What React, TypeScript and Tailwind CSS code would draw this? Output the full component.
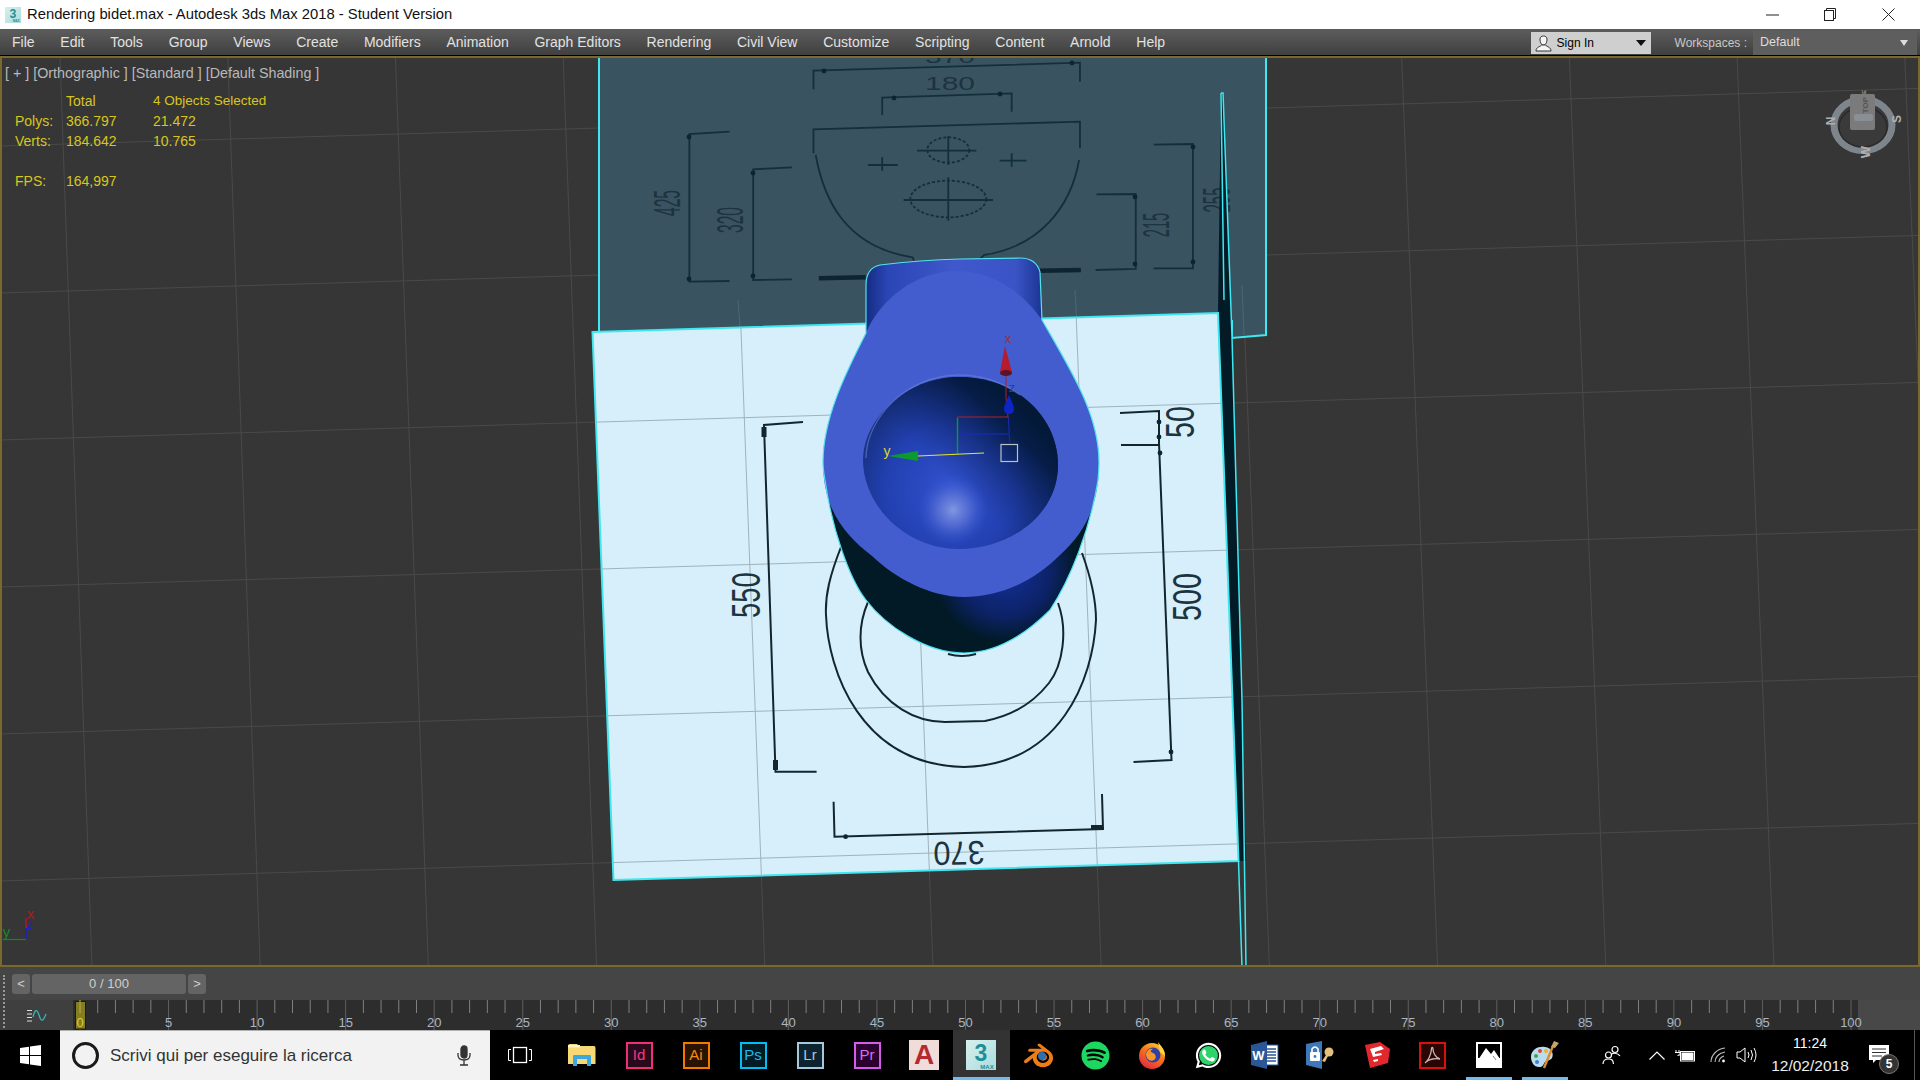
import React from "react";
import { FaSpotify, FaWhatsapp } from "react-icons/fa";
import { SiBlender } from "react-icons/si";

const menuItems = ["File", "Edit", "Tools", "Group", "Views", "Create", "Modifiers", "Animation", "Graph Editors", "Rendering", "Civil View", "Customize", "Scripting", "Content", "Arnold", "Help"];

const SANS = "Liberation Sans, sans-serif";

// page coords -> the drawing was measured from two stretched crops
const Z3 = "translate(580 50) scale(0.4464 0.3333)";

const RIM = "M866 333 C880 300 915 271 957 271 C995 271 1025 295 1042 320 C1072 372 1099 415 1099 462 C1099 510 1082 535 1060 555 C1030 585 995 597 964 597 C930 597 895 578 872 556 C845 535 823 510 823 462 C823 415 850 365 866 333 Z";
const BOWL = "M959 377 C1020 377 1058 420 1058 465 C1058 515 1010 549 959 549 C905 549 863 505 863 460 C863 420 905 377 959 377 Z";

function Logo3ds({ size }: { size: number }) {
  return (
    <svg width={size} height={size} viewBox="0 0 30 30">
      <defs>
        <linearGradient id={`max${size}`} x1="0" y1="0" x2="1" y2="1">
          <stop offset="0" stopColor="#d8f0ee" />
          <stop offset="1" stopColor="#a9dcdc" />
        </linearGradient>
      </defs>
      <rect width="30" height="30" fill={`url(#max${size})`} />
      <text x="15" y="21" textAnchor="middle" fontFamily={SANS} fontWeight="700" fontSize="23" fill="#1f8f97">3</text>
      <text x="21" y="28.5" textAnchor="middle" fontFamily={SANS} fontWeight="700" fontSize="6" fill="#1f8f97">MAX</text>
    </svg>
  );
}

function AdobeIcon({ label, border, bg, color }: { label: string; border: string; bg: string; color: string }) {
  return (
    <div
      className="flex h-[27px] w-[27px] items-center justify-center border-2 text-[15px] font-['Liberation_Sans',sans-serif]"
      style={{ borderColor: border, backgroundColor: bg, color }}
    >
      {label}
    </div>
  );
}

function Ruler() {
  const ticks = Array.from({ length: 101 }, (_, i) => i);
  const xOf = (i: number) => 80 + i * 17.71;
  return (
    <svg width="1920" height="30" className="relative block">
      {ticks.map((i) => (
        <line key={i} x1={xOf(i)} x2={xOf(i)} y1="0" y2={i % 5 === 0 ? 30 : 13} stroke="#8a8a8a" strokeWidth="1" opacity={i % 5 === 0 ? 0.55 : 0.9} />
      ))}
      <rect x="75.5" y="1.5" width="10" height="27.5" fill="#857d22" stroke="#1c1c10" />
      <line x1="80" x2="80" y1="0" y2="13" stroke="#b5ad50" />
      {ticks.filter((i) => i % 5 === 0).map((i) => (
        <text
          key={i}
          x={xOf(i)}
          y="26.5"
          textAnchor="middle"
          fontFamily={SANS}
          fontSize="13"
          fill={i === 0 ? "#dccf3a" : "#aab6c2"}
        >
          {i}
        </text>
      ))}
    </svg>
  );
}

function Dot({ x, y }: { x: number; y: number }) {
  return <circle cx={x} cy={y} r="2.4" fill="#0d2530" />;
}

function Num({ t, x, y, r = 0, sx = 1, sy = 1, fs = 20, fill = "#1c3440" }: { t: string; x: number; y: number; r?: number; sx?: number; sy?: number; fs?: number; fill?: string }) {
  return (
    <text
      transform={`translate(${x} ${y}) rotate(${r}) scale(${sx} ${sy})`}
      textAnchor="middle"
      dominantBaseline="central"
      fontFamily={SANS}
      fontSize={fs}
      fill={fill}
    >
      {t}
    </text>
  );
}

function Scene() {
  const verticals = Array.from({ length: 12 }, (_, i) => ({ x1: 60 + 167.7 * i, x2: 92 + 168.2 * i }));
  const horizontals = [0, 1, 2, 3, 4, 5].map((j) => 146 + 147 * j);
  const grid = (stroke: string, width = 1) => (
    <g stroke={stroke} strokeWidth={width}>
      {verticals.map((v, i) => <line key={i} x1={v.x1} y1="56" x2={v.x2} y2="967" />)}
      {horizontals.map((y, i) => <line key={i} x1="0" y1={y} x2="1920" y2={y - 57.6} />)}
    </g>
  );
  const bracket = { fill: "none", stroke: "#12303c", strokeWidth: 1.8, vectorEffect: "non-scaling-stroke" as const };
  const whiteLine = { fill: "none", stroke: "#13262e", strokeWidth: 2 };

  return (
    <svg width="1920" height="911" viewBox="0 56 1920 911" className="absolute inset-0">
      <defs>
        <clipPath id="whitePlane"><polygon points="592.5,332 1218,313 1238.5,861 613.5,880" /></clipPath>
        <linearGradient id="neck" x1="0" x2="1" y1="0" y2="0">
          <stop offset="0" stopColor="#152c82" />
          <stop offset="0.12" stopColor="#2a45b4" />
          <stop offset="0.5" stopColor="#3f58cc" />
          <stop offset="0.85" stopColor="#3a54c6" />
          <stop offset="1" stopColor="#1b3594" />
        </linearGradient>
        <radialGradient id="bowl" gradientUnits="userSpaceOnUse" cx="950" cy="490" r="118">
          <stop offset="0" stopColor="#3252cf" />
          <stop offset="0.55" stopColor="#2240b0" />
          <stop offset="0.85" stopColor="#16307f" />
          <stop offset="1" stopColor="#0d2258" />
        </radialGradient>
        <linearGradient id="bowlShade" gradientUnits="userSpaceOnUse" x1="1040" y1="385" x2="950" y2="480">
          <stop offset="0" stopColor="#01172a" />
          <stop offset="0.4" stopColor="#03193c" stopOpacity="0.85" />
          <stop offset="1" stopColor="#12297a" stopOpacity="0" />
        </linearGradient>
        <radialGradient id="glow" gradientUnits="userSpaceOnUse" cx="953" cy="510" r="36">
          <stop offset="0" stopColor="#8297e2" />
          <stop offset="0.45" stopColor="#6077d8" stopOpacity="0.7" />
          <stop offset="1" stopColor="#3252cf" stopOpacity="0" />
        </radialGradient>
        <radialGradient id="under" gradientUnits="userSpaceOnUse" cx="1005" cy="570" r="72">
          <stop offset="0" stopColor="#15309a" />
          <stop offset="0.65" stopColor="#0c2266" />
          <stop offset="1" stopColor="#011a26" />
        </radialGradient>
      </defs>

      <rect x="0" y="56" width="1920" height="911" fill="#363636" />
      {grid("#4a4a4a")}

      {/* back plane with the front view of the drawing */}
      <polygon points="599,56 1266,56 1266,335 1232,338 1220,340 600,340" fill="#3a5360" />
      <path d="M599 56 V333 M1266 56 V335 L1232 338 V320" fill="none" stroke="#3fe8f0" strokeWidth="2" />
      <g fill="none" stroke="#4e6672" strokeWidth="1">
        <line x1="738" y1="300" x2="741" y2="340" />
        <line x1="1075" y1="290" x2="1077" y2="330" />
        <line x1="1242" y1="285" x2="1244" y2="335" />
      </g>
      <g transform={Z3}>
        <path {...bracket} d="M523 118 V62 L1120 38 V95" />
        <path {...bracket} d="M677 195 V143 L967 130 V185" />
        <path {...bracket} d="M523 310 V238 L1120 215 V295" />
        <path {...bracket} d="M528 315 C545 440 590 590 745 622 L748 632 M895 628 L905 615 C1030 590 1100 470 1118 330" />
        <path {...bracket} d="M335 245 L245 252 V695 L335 693" />
        <path {...bracket} d="M475 352 L388 358 V690 L475 688" />
        <path {...bracket} d="M1285 284 L1373 282 V655 L1285 655" />
        <path {...bracket} d="M1157 433 L1245 432 V657 L1155 660" />
        <path {...bracket} d="M755 302 H888 M825 258 V345 M725 450 H925 M825 382 V512" />
        <path {...bracket} d="M645 345 H712 M677 322 V362 M940 332 H1000 M967 310 V350" />
        <ellipse {...bracket} cx="825" cy="300" rx="47" ry="38" strokeDasharray="3 2" />
        <ellipse {...bracket} cx="825" cy="447" rx="85" ry="55" strokeDasharray="3 2" />
        <path fill="none" stroke="#0d2530" strokeWidth="4.5" vectorEffect="non-scaling-stroke" d="M535 685 L640 682 M1030 662 L1122 660" />
      </g>
      <Dot x={824} y={71} />
      <Dot x={1072} y={63} />
      <Dot x={894} y={98} />
      <Dot x={1000} y={94} />
      <Dot x={689} y={137} />
      <Dot x={689} y={279} />
      <Dot x={753} y={173} />
      <Dot x={753} y={276} />
      <Dot x={1193} y={147} />
      <Dot x={1193} y={262} />
      <Dot x={1135} y={197} />
      <Dot x={1135} y={264} />
      <Num t="370" x={950} y={57} sx={1.5} sy={0.9} />
      <Num t="180" x={950} y={84} sx={1.5} sy={0.9} />
      <Num t="425" x={667} y={203} r={-90} sx={0.78} sy={1.85} />
      <Num t="320" x={730} y={220} r={-90} sx={0.78} sy={1.85} />
      <Num t="215" x={1156} y={225} r={-90} sx={0.74} sy={1.85} />
      <Num t="255" x={1216} y={200} r={-90} sx={0.75} sy={1.95} />

      {/* dark sliver of the plane seen edge on */}
      <polygon points="1221,93 1223,93 1232,337 1246,861 1238.5,861 1218,313" fill="#021b27" />
      <path d="M1221 93 H1223 L1232 337 L1242 700 L1246 967 M1221 93 L1224 300 M1238.5 861 L1242 967" fill="none" stroke="#3fe8f0" strokeWidth="1.5" />

      {/* floor plane */}
      <polygon points="592.5,332 1218,313 1238.5,861 613.5,880" fill="#d6effb" stroke="#3fe8f0" strokeWidth="2" />
      <g clipPath="url(#whitePlane)">{grid("#9fb3bc")}</g>
      <path {...whiteLine} d="M803 422 L764 425 L775.5 771.7 L816.6 771.7" />
      <path {...whiteLine} d="M1120 413 L1159 411 V445 L1121 445 M1159 443 L1171.5 760 L1133.5 762" />
      <path {...whiteLine} d="M833.6 801.7 L834.5 836.7 L1103 829 L1102 794" />
      <path {...whiteLine} d="M841 547 C830 575 825 595 826 615 C828 670 860 765 964 767 C1060 765 1093 680 1096 620 C1096 600 1090 575 1082 553" />
      <path {...whiteLine} d="M868 602 C858 625 858 650 868 672 C885 705 915 722 945 722 L985 721 C1012 716 1034 702 1049 683 C1063 665 1068 630 1058 603" />
      <path {...whiteLine} d="M948 654 Q962 658 976 654" />
      <rect x="761.5" y="427" width="5" height="10" fill="#13262e" />
      <rect x="773" y="760" width="5" height="10" fill="#13262e" />
      <Dot x={1159} y={422} />
      <Dot x={1159} y={437} />
      <Dot x={1160} y={453} />
      <Dot x={1171} y={752} />
      <Dot x={845.6} y={836.7} />
      <rect x="1091" y="825" width="11" height="5" fill="#13262e" />
      <Num t="50" x={1180} y={422} r={-90} fs={28} sx={1.02} sy={1.42} />
      <Num t="550" x={746} y={595} r={-90} fs={28} sx={0.98} sy={1.42} />
      <Num t="500" x={1187} y={597} r={-90} fs={28} sx={1.03} sy={1.42} />
      <Num t="370" x={959} y={853} r={179} fs={32} sx={0.96} sy={1.04} />

      {/* bidet */}
      <path d="M866 345 V285 Q866 268 880 265 Q920 260 960 259 L1020 258 Q1036 258 1040 272 L1042 330 Z" fill="url(#neck)" />
      <path d="M825 480 C832 530 850 580 866 600 C885 625 925 653 964 653 C1000 653 1030 630 1050 610 C1070 580 1090 530 1098 480 Z" fill="url(#under)" />
      <path d={RIM} fill="#435dcf" />
      <path d={BOWL} fill="url(#bowl)" />
      <path d={BOWL} fill="url(#bowlShade)" />
      <ellipse cx="953" cy="510" rx="34" ry="38" fill="url(#glow)" />
      <path d="M866 458 C866 420 905 375 959 375 C985 375 1005 384 1020 395" fill="none" stroke="#7186e0" strokeWidth="1.5" opacity="0.5" />
      <path d="M866 333 L866 285 Q866 268 880 265 Q920 260 960 259 L1020 258 Q1036 258 1040 272 L1042 320 C1072 372 1099 415 1099 462 C1099 470 1098.5 475 1098 480 C1090 530 1070 580 1050 610 C1030 630 1000 653 964 653 C925 653 885 625 866 600 C850 580 832 530 825 480 C823.5 472 823 468 823 462 C823 415 850 365 866 333 Z" fill="none" stroke="#52e2ee" strokeWidth="1.2" />

      {/* move gizmo */}
      <path d="M1006 373 V397 L1008 417 H957" fill="none" stroke="#b0202c" strokeWidth="1" />
      <path d="M957 434 H1008.5 M1008.5 417 L1009.5 442" fill="none" stroke="#1a2bc0" strokeWidth="1" />
      <path d="M957.5 418 V454" fill="none" stroke="#0f9a28" strokeWidth="1.4" />
      <path d="M918 456 L984 453" fill="none" stroke="#e8e820" strokeWidth="1.2" />
      <polygon points="1005,346 1000,372 1012,372" fill="#b61c2c" />
      <ellipse cx="1006" cy="373" rx="6" ry="3" fill="#5a1424" />
      <path d="M1009 395 C1006 402 1004 406 1004 409 C1004 412 1006 414 1009 414 C1012 414 1014 412 1014 409 C1014 406 1012 402 1009 395 Z" fill="#0c24c8" />
      <polygon points="888,456 918,451 918,461" fill="#0b9a2c" />
      <text x="1008" y="343" textAnchor="middle" fontFamily={SANS} fontSize="13" fill="#93303e">x</text>
      <text x="1012" y="392" textAnchor="middle" fontFamily={SANS} fontSize="13" fill="#2a3ea8">z</text>
      <text x="887" y="456" textAnchor="middle" fontFamily={SANS} fontSize="14" fill="#d8d83a">y</text>
      <rect x="1001" y="444.5" width="16.5" height="17" fill="none" stroke="#b8c0c8" strokeWidth="1.2" />

      {/* viewcube */}
      <ellipse cx="1863" cy="125" rx="29" ry="25.5" fill="#3a3a3a" stroke="#7e858c" strokeWidth="7" />
      <ellipse cx="1863" cy="127" rx="24" ry="20" fill="none" stroke="#2a2a2a" strokeWidth="1.5" />
      <rect x="1850" y="94" width="25" height="36" rx="2" fill="#7b7b7b" />
      <rect x="1854" y="114" width="19" height="7" rx="2" fill="#8a8f96" />
      <text transform="translate(1865 105) rotate(-90)" textAnchor="middle" dominantBaseline="central" fontFamily={SANS} fontSize="8" fontWeight="700" fill="#565656">TOP</text>
      <text transform="translate(1831 121) rotate(-90)" textAnchor="middle" dominantBaseline="central" fontFamily={SANS} fontSize="12" fontWeight="700" fill="#b0b0b0">N</text>
      <text transform="translate(1897 119) rotate(-90)" textAnchor="middle" dominantBaseline="central" fontFamily={SANS} fontSize="12" fontWeight="700" fill="#b0b0b0">S</text>
      <text transform="translate(1865 152) rotate(-90)" textAnchor="middle" dominantBaseline="central" fontFamily={SANS} fontSize="13" fontWeight="700" fill="#b0b0b0">W</text>
      <text transform="translate(1864 92) rotate(-90)" textAnchor="middle" dominantBaseline="central" fontFamily={SANS} fontSize="6" fontWeight="700" fill="#9a9a9a">E</text>

      {/* corner axis tripod */}
      <path d="M26 918 V928" stroke="#b01a22" strokeWidth="1.5" />
      <path d="M26 928 V940" stroke="#2020c8" strokeWidth="1.5" />
      <path d="M3 939.5 H26" stroke="#0f8a1e" strokeWidth="1.2" />
      <text x="30.5" y="919" textAnchor="middle" fontFamily={SANS} fontSize="15" fill="#a81c22">x</text>
      <text x="29.5" y="929" textAnchor="middle" fontFamily={SANS} fontSize="14" fill="#2424c0">z</text>
      <text x="6.5" y="937" textAnchor="middle" fontFamily={SANS} fontSize="15" fill="#128a20">y</text>
    </svg>
  );
}

function Folder() {
  return (
    <svg width="28" height="24" viewBox="0 0 28 24">
      <path d="M0 3 Q0 1 2 1 H9 L11 3 H26 Q27.5 3 27.5 5 V21 H0 Z" fill="#f8d775" />
      <rect x="0" y="2" width="12" height="2.5" fill="#fff3c0" />
      <path d="M5 23 V13 Q5 12 6 12 H22 Q23 12 23 13 V23 H19 V16 H9 V23 Z" fill="#3ba9e0" />
    </svg>
  );
}

function Firefox() {
  return (
    <svg width="28" height="28" viewBox="0 0 28 28">
      <defs>
        <linearGradient id="ff" x1="0.2" y1="1" x2="0.8" y2="0">
          <stop offset="0" stopColor="#e3243f" />
          <stop offset="0.6" stopColor="#f77a1c" />
          <stop offset="1" stopColor="#ffcb2c" />
        </linearGradient>
      </defs>
      <circle cx="14" cy="15" r="13" fill="url(#ff)" />
      <circle cx="15" cy="14" r="7.5" fill="#2f3fa6" />
      <path d="M8 13 C9 9 12 7 15 8 C12 9 12 11 15 12 C18 13 19 17 16 19 C12 21 8 18 8 13 Z" fill="#f9962a" />
      <path d="M20 1 C23 5 27 9 27 15 L22 11 Z" fill="#ffd93a" />
    </svg>
  );
}

function Word() {
  return (
    <svg width="28" height="28" viewBox="0 0 28 28">
      <rect x="13" y="4" width="14" height="20" fill="#fff" stroke="#2b5697" />
      <path d="M15 8 H25 M15 11 H25 M15 14 H25 M15 17 H25 M15 20 H25" stroke="#2b5697" strokeWidth="1.4" />
      <polygon points="0,4 16,0 16,28 0,24" fill="#2b5697" />
      <text x="7.5" y="19" textAnchor="middle" fontFamily={SANS} fontWeight="700" fontSize="13" fill="#fff">W</text>
    </svg>
  );
}

function LockBook() {
  return (
    <svg width="30" height="28" viewBox="0 0 30 28">
      <polygon points="0,3 16,0 16,28 0,24" fill="#3f78b8" />
      <rect x="4" y="11" width="10" height="9" rx="1" fill="#fff" />
      <path d="M6 11 V8 Q9 4 12 8 V11" fill="none" stroke="#fff" strokeWidth="1.6" />
      <circle cx="9" cy="15.5" r="1.4" fill="#3f78b8" />
      <circle cx="23" cy="11" r="4.5" fill="#e3c07d" />
      <path d="M20 14 L16 20 L19 21 L22 15 Z" fill="#e3c07d" />
    </svg>
  );
}

function Sketchup() {
  return (
    <svg width="26" height="28" viewBox="0 0 26 28">
      <polygon points="1,4 16,1 26,8 24,22 6,27" fill="#e2282f" />
      <path d="M6 8 L17 5 L20 8 L11 11 L11 13 L17 12 L18 14 L9 16 L8 13 Z" fill="#fff" />
      <path d="M9 19 L14 18 L14 20 L10 21 Z" fill="#fff" />
    </svg>
  );
}

function Acrobat() {
  return (
    <div className="flex h-[27px] w-[27px] items-center justify-center border-2 border-[#d4130a] bg-[#2b0404]">
      <svg width="19" height="19" viewBox="0 0 19 19">
        <path d="M2 17 C5 15 8 9 8.5 3 C8.5 1 10 1 10 3 C10 7 13 12 17 13 C13 12 6 13 3 16" fill="none" stroke="#c9b6b2" strokeWidth="1.3" />
      </svg>
    </div>
  );
}

function Photos() {
  return (
    <svg width="26" height="26" viewBox="0 0 26 26">
      <rect width="26" height="26" fill="#fff" />
      <rect x="2" y="2" width="22" height="14" fill="#000" />
      <path d="M2 18 L10 6 L15 12 L18 8 L24 17 V24 H2 Z" fill="#fff" />
      <path d="M17 14 L20 18" stroke="#888" strokeWidth="1" />
    </svg>
  );
}

function Paint() {
  return (
    <svg width="30" height="30" viewBox="0 0 30 30">
      <path d="M1 17 C1 9 9 6 15 7 C22 8 24 14 22 18 C20 21 17 20 15 22 C13 25 13 27 9 27 C4 27 1 22 1 17 Z" fill="#b9dcef" />
      <circle cx="6" cy="16" r="2" fill="#3aa84a" />
      <circle cx="10" cy="11" r="2" fill="#e0483a" />
      <circle cx="16" cy="11" r="2" fill="#f3b21c" />
      <circle cx="7" cy="22" r="2" fill="#3a7fd8" />
      <path d="M14 28 L23 6" stroke="#e08a2a" strokeWidth="2.4" />
      <path d="M21 7 L24 1 L29 3 L25 8 Z" fill="#c8a468" />
    </svg>
  );
}

function Tray() {
  return (
    <div className="absolute right-0 top-0 flex h-full w-[340px] items-center text-white font-['Liberation_Sans',sans-serif]">
      <svg width="20" height="20" viewBox="0 0 20 20" className="ml-[22px]" fill="none" stroke="#fff" strokeWidth="1.2">
        <circle cx="6.5" cy="10" r="3" />
        <path d="M1 19 C1 15 3 14 6.5 14 C10 14 11 15 11.5 19" />
        <circle cx="13" cy="4.5" r="3" />
        <path d="M9.5 9 C12 8 16 8 18 11" />
      </svg>
      <svg width="16" height="9" viewBox="0 0 16 9" className="ml-[27px]" fill="none" stroke="#fff" strokeWidth="1.2">
        <path d="M0.5 8.5 L8 1 L15.5 8.5" />
      </svg>
      <svg width="20" height="13" viewBox="0 0 20 13" className="ml-[10px]" fill="none" stroke="#fff" strokeWidth="1">
        <path d="M1 1 V3.5 M4 1 V3.5 M0 3.5 H5 V6 H3 V7" />
        <rect x="5.5" y="2.5" width="14" height="9.5" />
        <rect x="7" y="4" width="11" height="6.5" fill="#fff" />
      </svg>
      <svg width="16" height="16" viewBox="0 0 16 16" className="ml-[15px]" fill="none" stroke="#bbb" strokeWidth="1.1">
        <path d="M1 15 C1 8 7 2 15 1 M5 15 C5 10 9 6 15 5 M9 15 C9 12 11 10 14 9" />
        <circle cx="13.5" cy="14" r="1.4" fill="#fff" stroke="none" />
      </svg>
      <svg width="21" height="16" viewBox="0 0 21 16" className="ml-[10px]" fill="none" stroke="#fff" strokeWidth="1">
        <path d="M1 5 H4 L9 1 V15 L4 11 H1 Z" />
        <path d="M12 5 Q14 8 12 11 M15 3 Q18 8 15 13 M18 1 Q22 8 18 15" />
      </svg>
      <div className="ml-[13px] flex w-[80px] flex-col items-center leading-none">
        <span className="text-[14px]">11:24</span>
        <span className="mt-[8px] text-[15.5px] text-[#eeeeee]">12/02/2018</span>
      </div>
      <div className="relative ml-[19px] h-[18px] w-[20px] self-start mt-[15px]">
        <svg width="20" height="21" viewBox="0 0 20 21">
          <path d="M0 0 H20 V15 H7 L4 18 V15 H0 Z" fill="#fff" />
          <path d="M3 4 H17 M3 7.5 H17 M3 11 H13" stroke="#333" strokeWidth="1" />
        </svg>
        <div className="absolute left-[10px] top-[9px] flex h-[20px] w-[20px] items-center justify-center rounded-full border border-[#777] bg-[#333333] text-[12px] font-bold">5</div>
      </div>
      <div className="absolute right-[5px] top-0 h-full w-px bg-[#555555]" />
    </div>
  );
}

export default function App() {
  return (
    <div className="flex h-[1080px] w-[1920px] flex-col overflow-hidden font-['Liberation_Sans',sans-serif]">
      {/* title bar */}
      <div className="flex h-[29px] shrink-0 items-center bg-white pl-[5px] pr-[3px]">
        <Logo3ds size={16} />
        <span className="ml-[6px] text-[14.8px] text-[#111111]">Rendering bidet.max - Autodesk 3ds Max 2018 - Student Version</span>
        <div className="ml-auto flex">
          <div className="flex h-[29px] w-[58px] items-center justify-center">
            <svg width="13" height="2"><rect width="13" height="1" y="0.5" fill="#222" /></svg>
          </div>
          <div className="flex h-[29px] w-[58px] items-center justify-center">
            <svg width="12" height="13" viewBox="0 0 12 13" fill="none" stroke="#222"><rect x="0.5" y="2.5" width="9" height="10" /><path d="M2.5 2.5 V0.5 H11.5 V10.5 H9.5" /></svg>
          </div>
          <div className="flex h-[29px] w-[58px] items-center justify-center">
            <svg width="13" height="13" viewBox="0 0 13 13" stroke="#222"><path d="M0.5 0.5 L12.5 12.5 M12.5 0.5 L0.5 12.5" /></svg>
          </div>
        </div>
      </div>

      {/* menu bar */}
      <div className="flex h-[27px] shrink-0 items-center border-t border-b border-t-[#5a5a5a] border-b-black bg-gradient-to-b from-[#5c5c5c] to-[#404040] pl-[12px] pr-[3px] text-[14px] text-[#e2e2e2]">
        <div className="flex gap-[25.75px]">
          {menuItems.map((item) => (
            <span key={item}>{item}</span>
          ))}
        </div>
        <div className="ml-auto flex h-[22px] w-[120px] items-center bg-[#cfcfcf] pl-[4px] pr-[5px] text-[12px] text-black">
          <svg width="17" height="19" viewBox="0 0 17 19" fill="#f5f5f5" stroke="#333">
            <path d="M5 6 C5 2 12 2 12 6 C12 9 11 12 8.5 12 C6 12 5 9 5 6 Z" />
            <path d="M1 18 C1 14 5 14 6.5 12 H10.5 C12 14 16 14 16 18 Z" />
          </svg>
          <span className="ml-[5px]">Sign In</span>
          <svg width="10" height="6" className="ml-auto"><polygon points="0,0 10,0 5,6" fill="#111" /></svg>
        </div>
        <span className="ml-[24px] text-[12px] text-[#c8c8c8]">Workspaces :</span>
        <div className="ml-[6px] flex h-[24px] w-[164px] items-center bg-[#5e5e5e] pl-[7px] pr-[9px] text-[12.5px] text-[#dddddd]">
          <span>Default</span>
          <svg width="8" height="6" className="ml-auto"><polygon points="0,0 8,0 4,6" fill="#dddddd" /></svg>
        </div>
      </div>

      {/* viewport */}
      <div className="relative h-[911px] shrink-0 bg-[#363636]">
        <Scene />
        <div className="absolute inset-0 border-2 border-[#7a692d]" />
        <div className="absolute left-[5px] top-[8px] text-[14.3px] leading-[18px] text-[#b9b9b9]">[ + ] [Orthographic ] [Standard ] [Default Shading ]</div>
        <div className="absolute left-[15px] top-[35px] grid grid-cols-[51px_87px_auto] text-[14px] leading-[20px] text-[#d8c61c]">
          <span />
          <span>Total</span>
          <span className="text-[13.5px]">4 Objects Selected</span>
          <span>Polys:</span>
          <span>366.797</span>
          <span>21.472</span>
          <span>Verts:</span>
          <span>184.642</span>
          <span>10.765</span>
          <span className="col-span-3 h-[20px]" />
          <span>FPS:</span>
          <span>164,997</span>
          <span />
        </div>
      </div>

      {/* time slider */}
      <div className="relative z-10 flex h-[33px] shrink-0 items-center gap-[2px] bg-[#454545] pl-[12px] text-[13px] text-[#cfcfcf]">
        <div className="absolute left-[3px] top-[8px] h-[53px] border-l-2 border-dotted border-[#999999]" />
        <div className="flex h-[20px] w-[18px] items-center justify-center rounded-[3px] bg-[#646464]">&lt;</div>
        <div className="flex h-[20px] w-[154px] items-center justify-center rounded-[3px] bg-[#646464]">0 / 100</div>
        <div className="flex h-[20px] w-[18px] items-center justify-center rounded-[3px] bg-[#646464]">&gt;</div>
      </div>

      {/* track bar */}
      <div className="relative h-[30px] shrink-0 bg-[#2d2d2d]">
        <div className="absolute right-0 top-0 h-full w-[62px] bg-[#484848]" />
        <Ruler />
        <div className="absolute left-0 top-0 flex h-full w-[73px] items-center bg-[#3f3f3f] pl-[27px]">
          <svg width="20" height="13" viewBox="0 0 20 13" fill="none">
            <path d="M0 1.5 H5 M0 5 H5 M0 8.5 H5 M0 12 H5" stroke="#dddddd" />
            <path d="M6 8 C8 0 10 0 12 6 C14 13 16 13 19 5" stroke="#3ab5b5" strokeWidth="1.3" />
          </svg>
        </div>
        <div className="absolute left-[11px] right-0 top-[-1px] h-px bg-[#111111]" />
      </div>

      {/* taskbar */}
      <div className="relative flex h-[50px] shrink-0 bg-black">
        <div className="flex w-[60px] items-center justify-center">
          <svg width="21" height="21" viewBox="0 0 21 21" fill="#fff">
            <polygon points="0,3 9,1.7 9,10 0,10" />
            <polygon points="10,1.5 21,0 21,10 10,10" />
            <polygon points="0,11 9,11 9,19.3 0,18" />
            <polygon points="10,11 21,11 21,21 10,19.5" />
          </svg>
        </div>
        <div className="flex w-[430px] items-center border-t border-[#b0b0b0] bg-[#f2f2f2] pl-[12px] pr-[19px] text-[17px] text-[#333333]">
          <div className="h-[27px] w-[27px] rounded-full border-[3px] border-[#1a1a1a]" />
          <span className="ml-[11px]">Scrivi qui per eseguire la ricerca</span>
          <svg width="14" height="21" viewBox="0 0 14 21" className="ml-auto" fill="none" stroke="#333" strokeWidth="1.3">
            <rect x="4" y="1" width="6" height="12" rx="3" fill="#333" />
            <path d="M1 8 V10 Q1 15 7 15 Q13 15 13 10 V8 M7 15 V20 M3 20 H11" />
          </svg>
        </div>
        <div className="flex w-[63.5px] items-center justify-center pr-[4px]">
          <svg width="24" height="18" viewBox="0 0 24 18" fill="none" stroke="#fff">
            <rect x="5.5" y="1.5" width="13" height="15" strokeWidth="1.3" />
            <path d="M3 3.5 H0.5 V14.5 H3 M21 3.5 H23.5 V14.5 H21" strokeWidth="1" />
          </svg>
        </div>
        <div className="flex w-[57px] items-center justify-center"><Folder /></div>
        <div className="flex w-[57px] items-center justify-center"><AdobeIcon label="Id" border="#ee2f7c" bg="#2a0a1a" color="#ee3a86" /></div>
        <div className="flex w-[57px] items-center justify-center"><AdobeIcon label="Ai" border="#f27a00" bg="#2a1300" color="#f58a14" /></div>
        <div className="flex w-[57px] items-center justify-center"><AdobeIcon label="Ps" border="#00bff0" bg="#001a26" color="#16bdf0" /></div>
        <div className="flex w-[57px] items-center justify-center"><AdobeIcon label="Lr" border="#a5c8da" bg="#0d2330" color="#a5c8da" /></div>
        <div className="flex w-[57px] items-center justify-center"><AdobeIcon label="Pr" border="#d25de6" bg="#2b0030" color="#d872ea" /></div>
        <div className="flex w-[57px] items-center justify-center">
          <div className="flex h-[30px] w-[30px] items-center justify-center bg-[#f0dcd8] text-[28px] font-bold leading-none text-[#b52a30]">A</div>
        </div>
        <div className="relative flex w-[57px] items-center justify-center bg-[#333333]">
          <Logo3ds size={30} />
          <div className="absolute inset-x-0 bottom-0 h-[3px] bg-[#76b9ed]" />
        </div>
        <div className="flex w-[57px] items-center justify-center">
          <div className="relative text-[#ed7d16]">
            <SiBlender size={29} />
            <div className="absolute left-[14px] top-[11px] h-[8px] w-[8px] rounded-full bg-[#2a6fb0]" />
          </div>
        </div>
        <div className="flex w-[57px] items-center justify-center text-[#1ed760]"><FaSpotify size={29} /></div>
        <div className="flex w-[57px] items-center justify-center"><Firefox /></div>
        <div className="flex w-[56px] items-center justify-center">
          <div className="relative">
            <div className="absolute left-[5px] top-[5px] h-[19px] w-[19px] rounded-full bg-[#2cd46b]" />
            <FaWhatsapp size={29} className="relative text-white" />
          </div>
        </div>
        <div className="flex w-[56px] items-center justify-center"><Word /></div>
        <div className="flex w-[56px] items-center justify-center"><LockBook /></div>
        <div className="flex w-[56px] items-center justify-center"><Sketchup /></div>
        <div className="flex w-[56px] items-center justify-center"><Acrobat /></div>
        <div className="relative flex w-[56px] items-center justify-center">
          <Photos />
          <div className="absolute inset-x-[5px] bottom-0 h-[3px] bg-[#76b9ed]" />
        </div>
        <div className="relative flex w-[56px] items-center justify-center">
          <Paint />
          <div className="absolute inset-x-[5px] bottom-0 h-[3px] bg-[#76b9ed]" />
        </div>
        <Tray />
      </div>
    </div>
  );
}
